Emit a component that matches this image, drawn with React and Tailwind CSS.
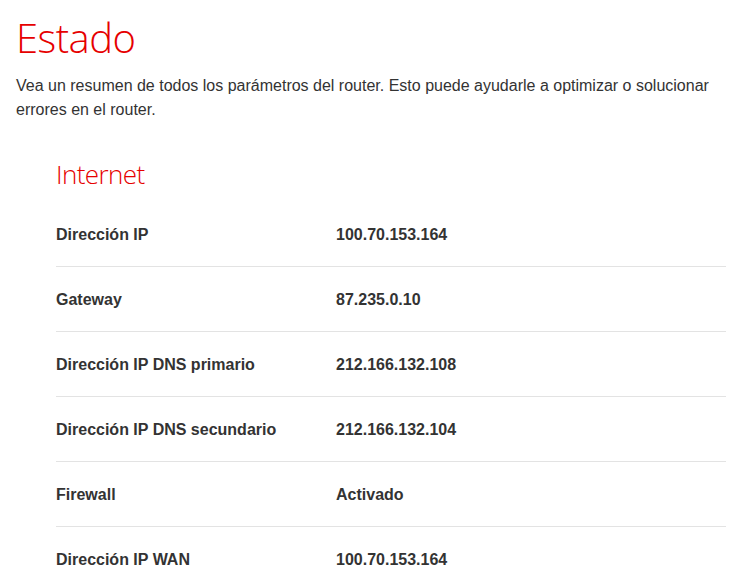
const ROWS = [
  { label: 'Dirección IP', value: '100.70.153.164' },
  { label: 'Gateway', value: '87.235.0.10' },
  { label: 'Dirección IP DNS primario', value: '212.166.132.108' },
  { label: 'Dirección IP DNS secundario', value: '212.166.132.104' },
  { label: 'Firewall', value: 'Activado' },
  { label: 'Dirección IP WAN', value: '100.70.153.164' },
]

export default function App() {
  return (
    <div className="min-h-screen bg-white px-4 pt-[14px] font-['Liberation_Sans',Arial,sans-serif] text-[#333]">
      {/* ── HEADER ── */}
      <h1 className="text-[40px] leading-[48px] font-light tracking-[-0.5px] text-[#e60000] font-['Open_Sans',sans-serif]">
        Estado
      </h1>
      <p className="mt-[12px] text-base leading-6 pr-2">
        Vea un resumen de todos los parámetros del router. Esto puede ayudarle a optimizar o solucionar errores en el router.
      </p>

      {/* ── INTERNET ── */}
      <section className="mt-[34px] pl-10 pr-[9px]">
        <h2 className="text-[26px] leading-[36px] font-light tracking-[-0.6px] text-[#e60000] font-['Open_Sans',sans-serif]">
          Internet
        </h2>
        <div className="mt-[10px]">
          {ROWS.map(({ label, value }) => (
            <div key={label} className="flex items-center h-[65px] pt-[2px] border-b border-[#e3e3e3] font-bold text-base">
              <span className="w-[280px] shrink-0">{label}</span>
              <span>{value}</span>
            </div>
          ))}
        </div>
      </section>
    </div>
  )
}
